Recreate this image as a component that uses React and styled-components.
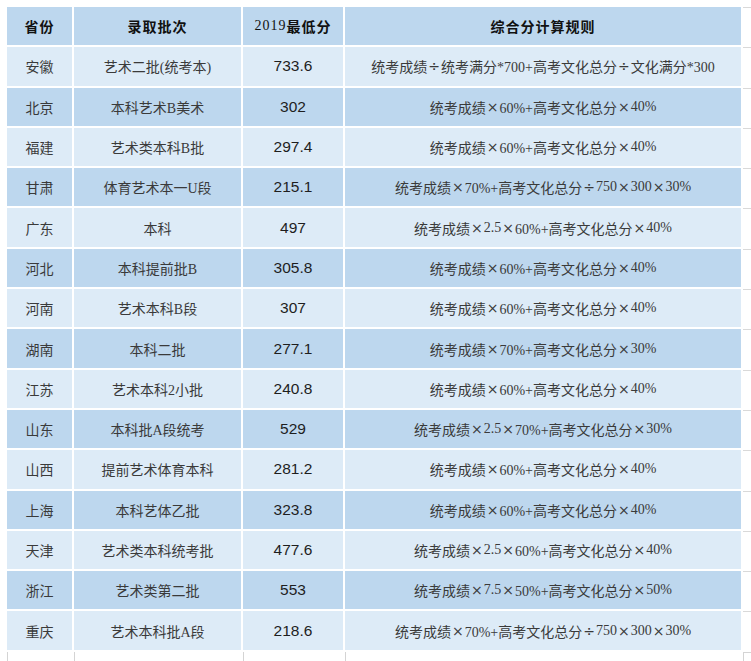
import React from "react";
import styled, { createGlobalStyle } from "styled-components";

const Global = createGlobalStyle`
  html, body { margin: 0; padding: 0; background: #ffffff; }
  body { overflow: hidden; }
`;

const rows = [
  ["安徽", "艺术二批(统考本)", "733.6", "统考成绩÷统考满分*700+高考文化总分÷文化满分*300"],
  ["北京", "本科艺术B美术", "302", "统考成绩×60%+高考文化总分×40%"],
  ["福建", "艺术类本科B批", "297.4", "统考成绩×60%+高考文化总分×40%"],
  ["甘肃", "体育艺术本一U段", "215.1", "统考成绩×70%+高考文化总分÷750×300×30%"],
  ["广东", "本科", "497", "统考成绩×2.5×60%+高考文化总分×40%"],
  ["河北", "本科提前批B", "305.8", "统考成绩×60%+高考文化总分×40%"],
  ["河南", "艺术本科B段", "307", "统考成绩×60%+高考文化总分×40%"],
  ["湖南", "本科二批", "277.1", "统考成绩×70%+高考文化总分×30%"],
  ["江苏", "艺术本科2小批", "240.8", "统考成绩×60%+高考文化总分×40%"],
  ["山东", "本科批A段统考", "529", "统考成绩×2.5×70%+高考文化总分×30%"],
  ["山西", "提前艺术体育本科", "281.2", "统考成绩×60%+高考文化总分×40%"],
  ["上海", "本科艺体乙批", "323.8", "统考成绩×60%+高考文化总分×40%"],
  ["天津", "艺术类本科统考批", "477.6", "统考成绩×2.5×60%+高考文化总分×40%"],
  ["浙江", "艺术类第二批", "553", "统考成绩×7.5×50%+高考文化总分×50%"],
  ["重庆", "艺术本科批A段", "218.6", "统考成绩×70%+高考文化总分÷750×300×30%"],
];

const Sheet = styled.div`
  box-sizing: border-box;
  height: 100vh;
  padding: 7px 0 0 7px;
  display: grid;
  grid-template-columns: 65px 167px 100px 396px 1fr;
  grid-template-rows: repeat(16, 38.3px) 1fr;
  gap: 2px;
  background: #ffffff;
`;

const Cell = styled.div`
  display: flex;
  align-items: center;
  justify-content: center;
  white-space: nowrap;
  background: ${(p) => (p.$light ? "#ddebf7" : "#bdd7ee")};
  color: ${(p) => (p.$head ? "#111111" : p.$num ? "#1e1e1e" : "#3a3a3a")};
  font-weight: ${(p) => (p.$head ? 700 : 400)};
  font-family: ${(p) =>
    p.$num
      ? '"Liberation Sans", Arial, sans-serif'
      : '"Liberation Serif", "Noto Sans CJK SC", serif'};
  font-size: ${(p) => (p.$num ? "15.5px" : "14px")};
  letter-spacing: ${(p) => (p.$head ? "1px" : "0")};
`;

const Plain = styled.span`
  font-weight: 400;
`;

const Op = styled.span`
  font-family: "DejaVu Sans", sans-serif;
  font-size: 14px;
  margin: 0 1px;
`;

const Gutter = styled.div`
  border-top: 1px solid #d9d9d9;
`;

const Tail = styled.div`
  border-left: 1px solid #d4d4d4;
  border-top: ${(p) => (p.$corner ? "1px solid #d4d4d4" : "none")};
`;

function Formula({ text }) {
  const parts = text.split(/([×÷])/);
  return (
    <>
      {parts.map((s, i) =>
        s === "×" || s === "÷" ? <Op key={i}>{s}</Op> : <span key={i}>{s}</span>
      )}
    </>
  );
}

export default function App() {
  return (
    <>
      <Global />
      <Sheet>
        <Cell $head>省份</Cell>
        <Cell $head>录取批次</Cell>
        <Cell $head>
          <Plain>2019</Plain>
          <span>最低分</span>
        </Cell>
        <Cell $head>综合分计算规则</Cell>
        <Gutter />
        {rows.map((r, i) => {
          const light = i % 2 === 0;
          return (
            <React.Fragment key={r[0]}>
              <Cell $light={light}>{r[0]}</Cell>
              <Cell $light={light}>{r[1]}</Cell>
              <Cell $light={light} $num>
                {r[2]}
              </Cell>
              <Cell $light={light}>
                <Formula text={r[3]} />
              </Cell>
              <Gutter />
            </React.Fragment>
          );
        })}
        <Tail />
        <Tail />
        <Tail />
        <Tail />
        <Tail $corner />
      </Sheet>
    </>
  );
}
